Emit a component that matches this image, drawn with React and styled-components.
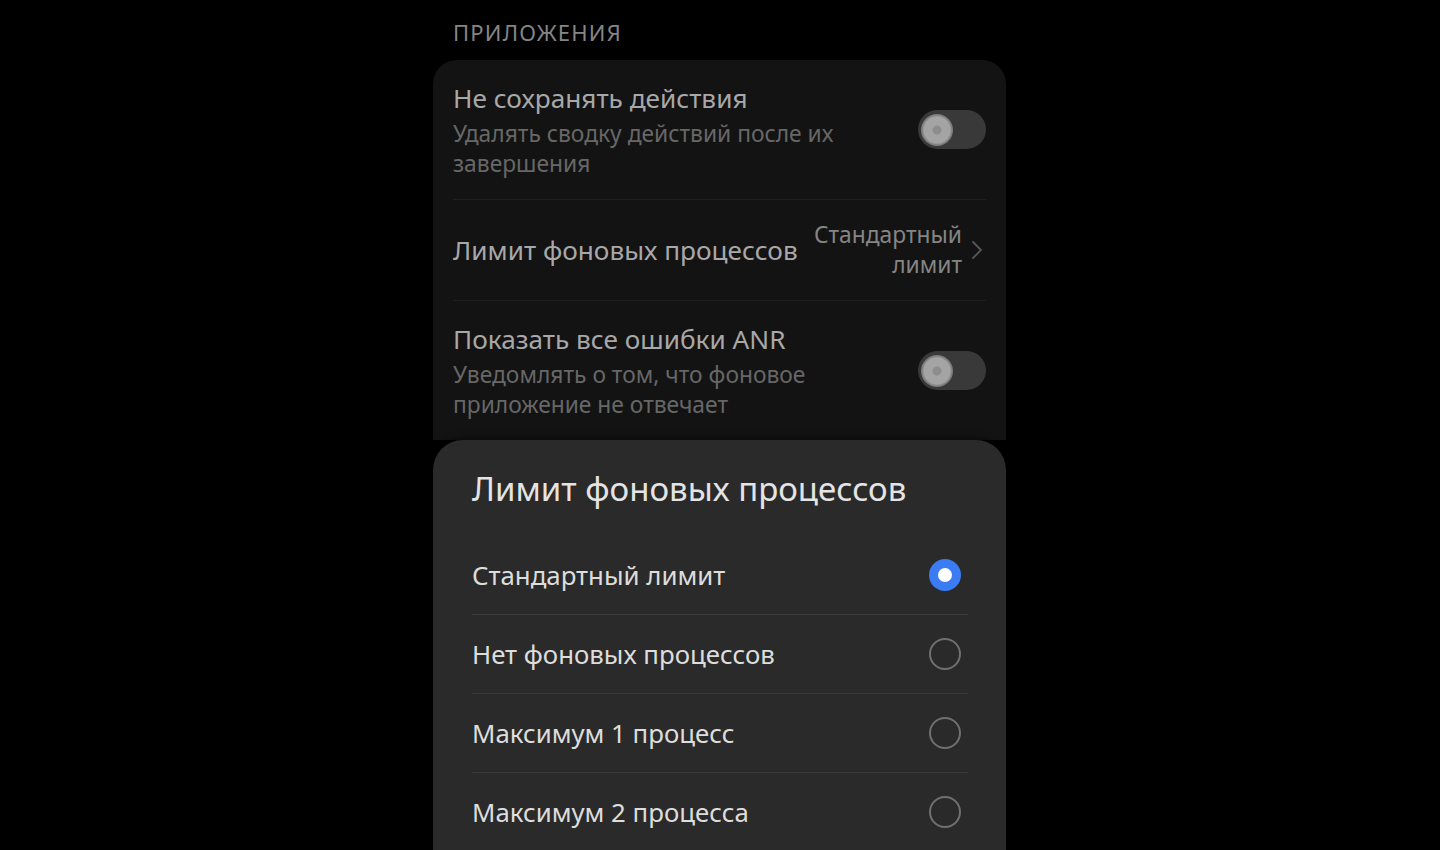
import styled, { createGlobalStyle } from "styled-components"

const GlobalStyle = createGlobalStyle`
  html, body {
    margin: 0;
    padding: 0;
    background: #000;
    height: 100%;
    overflow: hidden;
  }
  body {
    font-family: "Noto Sans", "Open Sans", sans-serif;
  }
`

const Page = styled.div`
  width: 1440px;
  height: 850px;
  display: flex;
  justify-content: center;
  background: #000;
  overflow: hidden;
`

const Column = styled.div`
  width: 573px;
  margin-left: -1px;
  display: flex;
  flex-direction: column;
`

const SectionHeader = styled.div`
  flex-shrink: 0;
  height: 60px;
  padding: 17px 20px 0;
  box-sizing: border-box;
  font-size: 22px;
  line-height: 30px;
  color: #858585;
  letter-spacing: 1.2px;
`

const Card = styled.div`
  flex-shrink: 0;
  background: #131313;
  border-radius: 24px 24px 0 0;
  padding: 0 20px;
`

const Row = styled.div`
  display: flex;
  align-items: center;
  gap: 16px;
  padding: 20px 0;
  min-height: ${p => p.$minHeight || 0}px;
  box-sizing: border-box;
  border-bottom: ${p => (p.$last ? "none" : "1px solid #1f1f1f")};
`

const RowText = styled.div`
  flex: 1;
  min-width: 0;
`

const RowTitle = styled.div`
  font-size: 26.2px;
  line-height: 36px;
  color: #a8a8a8;
  white-space: nowrap;
`

const RowSub = styled.div`
  margin-top: 3px;
  font-size: 22.8px;
  line-height: 30px;
  color: #676767;
  max-width: 400px;
`

const Value = styled.div`
  flex-shrink: 0;
  text-align: right;
  font-size: 22.8px;
  line-height: 30px;
  color: #858585;
  width: 150px;
`

const Chevron = styled.svg`
  width: 14px;
  height: 22px;
  flex-shrink: 0;
  margin-left: -8px;
  margin-right: 2px;
`

const Track = styled.div`
  width: 68px;
  height: 39px;
  border-radius: 20px;
  background: #393939;
  display: flex;
  align-items: center;
  padding-left: 3px;
  box-sizing: border-box;
  flex-shrink: 0;
`

const Knob = styled.div`
  width: 32px;
  height: 32px;
  border-radius: 50%;
  background: radial-gradient(circle, #8d8d8d 0 4px, #a4a4a4 5px 13px, #7c7c7c 15px);
`

const Sheet = styled.div`
  flex: 1;
  background: #2a2a2a;
  border-radius: 30px 30px 0 0;
  padding: 27px 38px 0 39px;
  box-shadow: 0 -2px 6px rgba(0, 0, 0, 0.5);
`

const SheetTitle = styled.div`
  font-size: 33px;
  line-height: 44px;
  color: #e4e4e4;
  margin-bottom: 25px;
`

const Option = styled.div`
  height: 79px;
  display: flex;
  align-items: center;
  justify-content: space-between;
  box-sizing: border-box;
  border-bottom: 1px solid #3a3a3a;
  padding-right: 7px;
`

const OptionLabel = styled.div`
  font-size: 25.8px;
  line-height: 34px;
  color: #dddddd;
`

const Radio = styled.div`
  width: 32px;
  height: 32px;
  border-radius: 50%;
  box-sizing: border-box;
  display: flex;
  align-items: center;
  justify-content: center;
  background: ${p => (p.$checked ? "#3b7cf5" : "transparent")};
  border: ${p => (p.$checked ? "none" : "2px solid #707070")};

  &::after {
    content: "";
    display: ${p => (p.$checked ? "block" : "none")};
    width: 14px;
    height: 14px;
    border-radius: 50%;
    background: #fff;
  }
`

const Toggle = () => (
  <Track>
    <Knob />
  </Track>
)

const options = [
  "Стандартный лимит",
  "Нет фоновых процессов",
  "Максимум 1 процесс",
  "Максимум 2 процесса",
]

const App = () => {
  return (
    <Page>
      <GlobalStyle />
      <Column>
        <SectionHeader>ПРИЛОЖЕНИЯ</SectionHeader>
        <Card>
          <Row>
            <RowText>
              <RowTitle>Не сохранять действия</RowTitle>
              <RowSub>Удалять сводку действий после их завершения</RowSub>
            </RowText>
            <Toggle />
          </Row>
          <Row $minHeight={100}>
            <RowText>
              <RowTitle>Лимит фоновых процессов</RowTitle>
            </RowText>
            <Value>Стандартный лимит</Value>
            <Chevron viewBox="0 0 14 22">
              <path d="M3 3 L11 11 L3 19" fill="none" stroke="#555" strokeWidth="1.8" strokeLinecap="round" strokeLinejoin="round" />
            </Chevron>
          </Row>
          <Row $last>
            <RowText>
              <RowTitle>Показать все ошибки ANR</RowTitle>
              <RowSub>Уведомлять о том, что фоновое приложение не отвечает</RowSub>
            </RowText>
            <Toggle />
          </Row>
        </Card>
        <Sheet>
          <SheetTitle>Лимит фоновых процессов</SheetTitle>
          {options.map((o, i) => (
            <Option key={o}>
              <OptionLabel>{o}</OptionLabel>
              <Radio $checked={i === 0} />
            </Option>
          ))}
        </Sheet>
      </Column>
    </Page>
  )
}

export default App
